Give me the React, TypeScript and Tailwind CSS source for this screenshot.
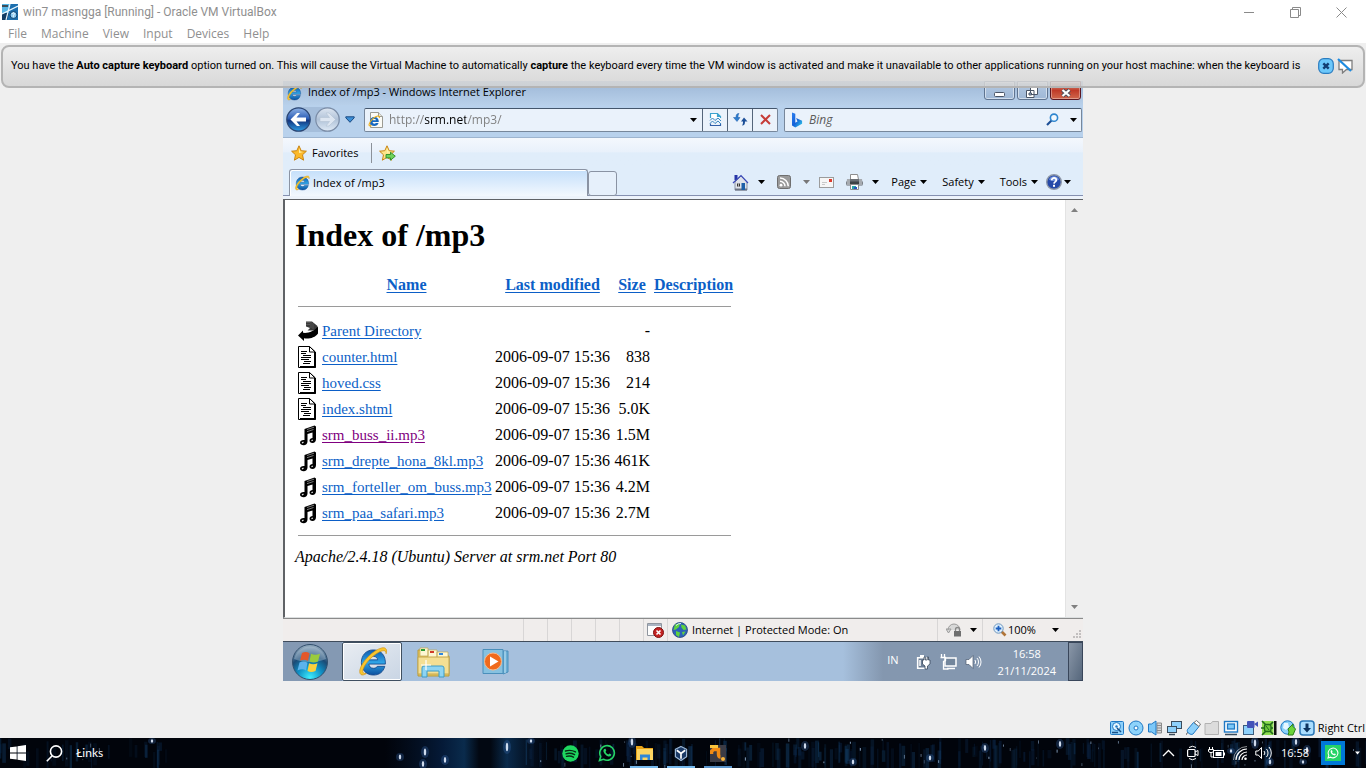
import React from "react";

type SvgProps = { className?: string };

const Caret = ({ className = "text-black" }: SvgProps) => (
  <svg width="7" height="4" viewBox="0 0 7 4" className={className} aria-hidden="true">
    <path d="M0 0h7L3.500 4z" fill="currentColor" />
  </svg>
);

const IeIcon = ({ size = 16 }: { size?: number }) => (
  <svg width={size} height={size} viewBox="0 0 32 32" aria-hidden="true">
    <defs>
      <linearGradient id="ieBlue" x1="0" y1="0" x2="0" y2="1">
        <stop offset="0" stopColor="#0f5cae" />
        <stop offset="0.5" stopColor="#2fa4e6" />
        <stop offset="1" stopColor="#0b4f9e" />
      </linearGradient>
    </defs>
    <path
      d="M17 4C9 4 4.500 10 4.500 17S9 30 17 30c6 0 10-3 11.700-9H21c-.8 1.400-2.200 2-4 2-2.800 0-4.500-1.600-4.700-4.300h17C29.800 10 25 4 17 4zm-4.500 10.300c.5-2.300 2-3.600 4.500-3.600s4 1.300 4.400 3.600z"
      fill="url(#ieBlue)"
      stroke="#0d4084"
      strokeWidth="0.800"
    />
    <path
      d="M30 8c1.600-4.200-.2-7-4.500-6C17 4 5 16 3 24.500c-1 5 2 7 6.500 4C6 28.500 5.200 26.500 6.500 23.500 9 16.500 18.500 7.500 25.500 5.200c3-.8 4.500-.2 4.500 2.800z"
      fill="#f9c62f"
      stroke="#d3930f"
      strokeWidth="0.700"
    />
  </svg>
);

const VmIcon = () => (
  <svg width="16" height="16" viewBox="0 0 16 16" aria-hidden="true">
    <rect width="16" height="16" fill="#1d6fae" />
    <path d="M0 0h8L4 16H0z" fill="#55b4e4" />
    <path d="M0 9h7l-2 7H0z" fill="#123c64" />
    <path d="M8 0L4 16M0 10l16-8" stroke="#e8f6ff" strokeWidth="1.200" />
    <path d="M0 1h6v2H0z" fill="#3c4c58" />
    <circle cx="11.500" cy="11" r="3.500" fill="#8cc9ef" stroke="#0f4370" />
    <path d="M10.500 10c0-2 3-1 1.500.6l-.7 1v1.200" stroke="#fff" fill="none" />
  </svg>
);

const HomeIcon = () => (
  <svg width="17" height="17" viewBox="0 0 17 17" aria-hidden="true">
    <path d="M2.500 1h3v5h-3z" fill="#2636a8" />
    <path d="M3 8v8h12V8L9 2z" fill="#dfe3ea" stroke="#8b93a5" />
    <path d="M1 9L9 1.500 16 9" fill="none" stroke="#3a49b8" strokeWidth="1.200" />
    <path d="M3 15.500h12" stroke="#6c7484" strokeWidth="2" />
    <rect x="9.500" y="9" width="3.500" height="7" fill="#1d5fa8" />
    <rect x="5" y="9.500" width="3" height="3" fill="#333" />
    <rect x="6.200" y="9.500" width=".6" height="3" fill="#fff" />
  </svg>
);

const RssIcon = () => (
  <svg width="14" height="14" viewBox="0 0 14 14" aria-hidden="true">
    <rect x=".5" y=".5" width="13" height="13" rx="2" fill="#9a9a9a" stroke="#6f6f6f" />
    <circle cx="4" cy="10.200" r="1.400" fill="#fff" />
    <path d="M3 6.300a5 5 0 0 1 5 5M3 3a8.300 8.300 0 0 1 8.300 8.300" fill="none" stroke="#fff" strokeWidth="1.500" />
  </svg>
);

const MailIcon = () => (
  <svg width="15" height="11" viewBox="0 0 15 11" aria-hidden="true">
    <rect x=".5" y=".5" width="14" height="10" fill="#f6f6f6" stroke="#9c9c9c" />
    <path d="M10 2h3v3h-3z" fill="#dd3b2d" />
    <path d="M3 5.500h5M3 7.500h3" stroke="#c8c8c8" />
  </svg>
);

const PrinterIcon = () => (
  <svg width="17" height="16" viewBox="0 0 17 16" aria-hidden="true">
    <path d="M4.500.5h7l1 5h-8z" fill="#fff" stroke="#8d8d8d" />
    <path d="M1 5h15l.5 6.500H.5z" fill="#6b6f74" />
    <path d="M.5 7.500h16v3H.5z" fill="#3e4144" />
    <path d="M1 5h3v6H1zM13 5h3v6h-3z" fill="#a7abb0" />
    <path d="M4.500 10.500h8v5h-8z" fill="#fff" stroke="#8d8d8d" />
    <path d="M6 12h4v3H6z" fill="#2aa8a8" />
    <path d="M8 13h3v2H8z" fill="#2b55c0" />
  </svg>
);

const HelpIcon = () => (
  <svg width="16" height="16" viewBox="0 0 16 16" aria-hidden="true">
    <circle cx="8" cy="8" r="7.300" fill="#2549a8" stroke="#8d97a8" strokeWidth="1.400" />
    <path d="M3 5.500a5.500 5.500 0 0 1 10 0c-3 2-7 2-10 0z" fill="#6e8fdc" />
    <path d="M5.700 6.300c0-3.200 4.800-3 4.600-.2C10.200 8 8.200 7.800 8 9.700" fill="none" stroke="#fff" strokeWidth="1.700" />
    <rect x="7" y="10.800" width="2" height="2" fill="#fff" />
  </svg>
);

const StarIcon = ({ add = false }: { add?: boolean }) => (
  <svg width="17" height="16" viewBox="0 0 17 16" aria-hidden="true">
    <path
      d="M8 .8l2.200 4.900 5.200.5-3.900 3.600 1.100 5.400L8 12.400l-4.600 2.800 1.100-5.400L.6 6.200l5.200-.5z"
      fill={add ? "#fbe48a" : "#fbb92a"}
      stroke="#c98412"
      strokeWidth="1"
    />
    <path d="M8 3l1.300 3.500 3 .4L8 8z" fill="#fff0a8" />
    {add && <path d="M7 9.500h4.500V7.200l4.800 4-4.800 4v-2.300H7z" fill="#6fd35b" stroke="#2c8a26" strokeWidth=".9" />}
  </svg>
);

const BackIcon = () => (
  <svg width="25" height="25" viewBox="0 0 25 25" aria-hidden="true">
    <defs>
      <linearGradient id="bk" x1="0" y1="0" x2="0" y2="1">
        <stop offset="0" stopColor="#8fb3e6" />
        <stop offset=".45" stopColor="#2f60b8" />
        <stop offset=".55" stopColor="#12367f" />
        <stop offset="1" stopColor="#2f9ee6" />
      </linearGradient>
    </defs>
    <circle cx="12.500" cy="12.500" r="11.700" fill="url(#bk)" stroke="#2b4674" strokeWidth="1.200" />
    <path d="M4.500 12.500L11 6h3l-3.500 4.500h9.500v4h-9.500L14 19h-3z" fill="#fff" />
  </svg>
);

const ForwardIcon = () => (
  <svg width="25" height="25" viewBox="0 0 25 25" aria-hidden="true">
    <defs>
      <linearGradient id="fw" x1="0" y1="0" x2="0" y2="1">
        <stop offset="0" stopColor="#dde6f1" />
        <stop offset=".5" stopColor="#b0c2d8" />
        <stop offset="1" stopColor="#dfeaf5" />
      </linearGradient>
    </defs>
    <circle cx="12.500" cy="12.500" r="11.700" fill="url(#fw)" stroke="#7a8ca6" strokeWidth="1.200" />
    <path d="M20.500 12.500L14 6h-3l3.500 4.500H5v4h9.500L11 19h3z" fill="#dde6f1" stroke="#b3c2d4" strokeWidth=".6" />
  </svg>
);

const PageIeIcon = () => (
  <svg width="16" height="16" viewBox="0 0 16 16" aria-hidden="true">
    <path d="M2.500.5h8l4 4v11h-12z" fill="#fbfbf6" stroke="#9b9b93" />
    <path d="M10.500.5v4h4" fill="#e3e3dc" stroke="#9b9b93" />
    <svg x="0" y="3" width="12" height="12" viewBox="0 0 32 32">
      <path d="M17 5C9.500 5 5 10.500 5 17s4.500 12 12 12c5.500 0 9.600-2.800 11.200-8H21c-.8 1.400-2.200 2-4 2-2.800 0-4.500-1.600-4.700-4.300h16.500C29.300 10.500 24.500 5 17 5zm-4.500 9.300c.5-2.300 2-3.600 4.500-3.600s4 1.300 4.400 3.600z" fill="#1668c0" />
      <path d="M30 8c1.200-3.400-.2-6-4.500-5.200C17 4.500 5 16 3 24.500c-1 4.800 2 6 6.500 3.300" fill="none" stroke="#f0b21e" strokeWidth="3" />
    </svg>
  </svg>
);

const CompatIcon = () => (
  <svg width="13" height="15" viewBox="0 0 13 15" aria-hidden="true">
    <path d="M1.500 6V1.500h7l3 3V6M8.500 1.500v3h3" fill="#fff" stroke="#3ba3cf" strokeWidth="1.200" />
    <path d="M1.500 11.500v2h10v-2" fill="none" stroke="#2f5fa8" strokeWidth="1.200" />
    <path d="M1 8.500L3.500 6 6 8.500 9 6l3 3M1 11.500L3.500 9 6 11.500 9 9l3 3" fill="none" stroke="#3a88c0" strokeWidth="1" />
  </svg>
);

const RefreshIcon = () => (
  <svg width="15" height="13" viewBox="0 0 15 13" aria-hidden="true">
    <path d="M6 .5C3.500.5 3 2 3 4.500H.5L4 8.500 7 4.500H5C5 3 5 2 6 .5z" fill="#2f7fd0" stroke="#1c5aa6" strokeWidth=".5" />
    <path d="M9 12.500c2.500 0 3-1.500 3-4h2.500L11 4.500 8 8.500h2c0 1.500 0 2.500-1 4z" fill="#1c4f98" />
  </svg>
);

const BingIcon = () => (
  <svg width="12" height="16" viewBox="0 0 12 16" aria-hidden="true">
    <defs>
      <linearGradient id="bing" x1="0" y1="0" x2="1" y2="1">
        <stop offset="0" stopColor="#2c7ff0" />
        <stop offset=".5" stopColor="#1460d8" />
        <stop offset="1" stopColor="#35d4e8" />
      </linearGradient>
    </defs>
    <path d="M1 .5l3.300 1.300v9l2.200-1.300-1.400-3.500 6 2.700v3L4.300 15.500 1 13.500z" fill="url(#bing)" />
  </svg>
);

const GlassIcon = () => (
  <svg width="13" height="13" viewBox="0 0 13 13" aria-hidden="true">
    <path d="M6 7L1 12" stroke="#1d4f96" strokeWidth="2.200" />
    <circle cx="8" cy="4.700" r="3.600" fill="#f2f8fd" stroke="#2f86cf" strokeWidth="1.600" />
  </svg>
);

const ParentDirIcon = () => (
  <svg width="20" height="22" viewBox="0 0 20 22" aria-hidden="true">
    <path d="M8 1.500h6l5.500 4.500-1 4.500H9.500L12 8l-4-1.500z" fill="#3a3a3a" />
    <path d="M9 2v4M11 2v4M13 2.500v6M15 3.500v6" stroke="#8a8a8a" strokeWidth=".7" strokeDasharray="1 1" />
    <path d="M0 15.500L5 10.500v2.300C11 13.300 15.500 11.500 20 6.500v7C17 18 11 19 6 18.300V21z" fill="#000" />
  </svg>
);

const TextFileIcon = () => (
  <svg width="20" height="22" viewBox="0 0 20 22" aria-hidden="true">
    <path d="M.5.500h11l6 5.500v15.500H.5z" fill="#fff" stroke="#000" />
    <path d="M17 6v15M2 21h15.500" stroke="#000" strokeWidth="2" />
    <path d="M11.500.5V6H17z" fill="#fff" stroke="#000" />
    <path d="M3 5.500h6M3 7.500h5M5 9.500h8M3 11.500h10M3 13.500h8M6 15.500h7M5 17.500h7" stroke="#000" />
  </svg>
);

const MusicIcon = () => (
  <svg width="20" height="22" viewBox="0 0 20 22" aria-hidden="true">
    <path d="M6.500 5L16.500 1.500l1.500 1V15c0 2.600-1.500 4-3.500 4s-3-1.200-3-2.500c0-1.600 1.500-2.500 3-2.500V8.500L9.500 10v7.500c0 2.400-1.700 3.700-3.800 3.700S2 20 2 18.700C2 16.700 4 15.700 6.500 16z" fill="#000" />
    <path d="M9 5.500l7-2.300M9 7.700l6.500-2.200" stroke="#9a9a9a" strokeWidth=".8" />
    <path d="M4 19l1.500-1M13.500 16.700l1.300-.8" stroke="#e8e8e8" strokeWidth="1.200" />
  </svg>
);

const files: { icon: "back" | "text" | "music"; name: string; date: string; size: string; visited?: boolean }[] = [
  { icon: "back", name: "Parent Directory", date: "", size: "-" },
  { icon: "text", name: "counter.html", date: "2006-09-07 15:36", size: "838" },
  { icon: "text", name: "hoved.css", date: "2006-09-07 15:36", size: "214" },
  { icon: "text", name: "index.shtml", date: "2006-09-07 15:36", size: "5.0K" },
  { icon: "music", name: "srm_buss_ii.mp3", date: "2006-09-07 15:36", size: "1.5M", visited: true },
  { icon: "music", name: "srm_drepte_hona_8kl.mp3", date: "2006-09-07 15:36", size: "461K" },
  { icon: "music", name: "srm_forteller_om_buss.mp3", date: "2006-09-07 15:36", size: "4.2M" },
  { icon: "music", name: "srm_paa_safari.mp3", date: "2006-09-07 15:36", size: "2.7M" },
];

function HostTitle() {
  return (
    <header className="bg-white font-['Open_Sans',sans-serif] text-[12px] text-[#8f8f8f]">
      <div className="flex h-6 items-center pr-[2px] pl-[2px]">
        <VmIcon />
        <h1 className="ml-[5px] flex-1 font-['Roboto',sans-serif] leading-4">win7 masngga [Running] - Oracle VM VirtualBox</h1>
        <button aria-label="Minimize" className="flex h-5 w-[46px] items-center justify-center">
          <svg width="11" height="11" viewBox="0 0 11 11"><path d="M0 5.500h10" stroke="#8a8a8a" /></svg>
        </button>
        <button aria-label="Restore" className="flex h-5 w-[46px] items-center justify-center">
          <svg width="11" height="11" viewBox="0 0 11 11" fill="none" stroke="#8a8a8a"><path d="M.5 2.500h8v8h-8zM2.500 2.500v-2h8v8h-2" /></svg>
        </button>
        <button aria-label="Close" className="flex h-5 w-[46px] items-center justify-center">
          <svg width="11" height="11" viewBox="0 0 11 11"><path d="M.5.500l10 10M10.500.5l-10 10" stroke="#8a8a8a" /></svg>
        </button>
      </div>
      <nav className="flex h-[19px] items-center gap-[14px] pl-2 leading-4">
        {["File", "Machine", "View", "Input", "Devices", "Help"].map((m) => (
          <button key={m}>{m}</button>
        ))}
      </nav>
    </header>
  );
}

function Banner() {
  return (
    <div className="relative z-10 mx-px mt-[2px] flex h-[43px] items-center rounded-[8px] border-2 border-[#b4b4b4] bg-linear-to-b from-[#eeeeee] to-[#d4d4d4]/85 pr-[9px] pb-[2px] pl-2 font-['Roboto',sans-serif] text-[11px] text-black">
      <p className="min-w-0 flex-1 leading-4 whitespace-nowrap">
        You have the <b>Auto capture keyboard</b> option turned on. This will cause the Virtual Machine to automatically{" "}
        <b>capture</b> the keyboard every time the VM window is activated and make it unavailable to other applications
        running on your host machine: when the keyboard is
      </p>
      <button aria-label="Close message" className="ml-[6px]">
        <svg width="16" height="16" viewBox="0 0 16 16">
          <rect x=".7" y=".7" width="14.600" height="14.600" rx="5" fill="#6cc8fb" stroke="#2a7cc0" strokeWidth="1.200" />
          <path d="M5.300 5.300l5.400 5.400M10.700 5.300l-5.400 5.400" stroke="#123f74" strokeWidth="2.400" />
        </svg>
      </button>
      <button aria-label="Do not show again" className="ml-[3px]">
        <svg width="17" height="16" viewBox="0 0 17 16">
          <path d="M2 2.500h13v9H9.500L5.500 15v-3.500H2z" fill="#fff" stroke="#7e7e7e" strokeWidth="1.300" />
          <path d="M1 1l13 12" stroke="#1e8be0" strokeWidth="2.200" />
        </svg>
      </button>
    </div>
  );
}

function IeChrome() {
  const cap = "flex h-[19px] w-[31px] items-center justify-center rounded-b-[3px] border border-[#5f7490] bg-linear-to-b from-[#b4c9e2] to-[#9fb8d6] shadow-[inset_0_0_0_1px_rgba(255,255,255,0.5)]";
  return (
    <div className="text-[11px] leading-4">
      <div className="flex h-6 items-center bg-linear-to-b from-[#9db7d6] to-[#b8d0ea] pr-[2px] pl-[3px]">
        <IeIcon size={16} />
        <h2 className="ml-[6px] flex-1 pb-[2px] text-black">Index of /mp3 - Windows Internet Explorer</h2>
        <div className="flex h-6 items-start gap-[2px]">
          <button aria-label="Minimize" className={cap}>
            <svg width="12" height="6" viewBox="0 0 12 6" className="mt-2"><rect x=".5" y=".5" width="10" height="4" rx="1" fill="#fff" stroke="#4a5566" /></svg>
          </button>
          <button aria-label="Restore" className={cap}>
            <svg width="13" height="12" viewBox="0 0 13 12" className="mt-1"><path d="M4.500.5h7v7h-7zM.5 3.500h7.500v7H.5z" fill="#fff" stroke="#4a5566" /><path d="M3 6h2.500v2H3z" fill="#9fb8d6" stroke="#4a5566" /></svg>
          </button>
          <button aria-label="Close" className="flex h-[19px] w-[31px] items-center justify-center rounded-b-[3px] border border-[#5c1620] bg-linear-to-b from-[#d29a92] via-[#c03a28] to-[#d0664c] shadow-[inset_0_0_0_1px_rgba(255,255,255,0.35)]">
            <svg width="12" height="10" viewBox="0 0 12 10" className="mt-1"><path d="M2.500 2l7 6M9.500 2l-7 6" stroke="#4b4f5c" strokeWidth="4" /><path d="M2.500 2l7 6M9.500 2l-7 6" stroke="#fff" strokeWidth="2.200" /></svg>
          </button>
        </div>
      </div>

      <div className="flex h-[33px] items-center border-b border-[#9db4cf] bg-[#b8d1ec] pr-px pb-[3px] pl-[3px]">
        <div className="flex items-center rounded-full bg-[#a5bedb]">
          <button aria-label="Back"><BackIcon /></button>
          <button aria-label="Forward" className="ml-1"><ForwardIcon /></button>
        </div>
        <button aria-label="Recent pages" className="ml-1 flex h-6 w-3 items-center justify-center">
          <svg width="10" height="7" viewBox="0 0 10 7"><path d="M.8.8h8.400v1L5 6.300.8 1.800z" fill="#3c8fd6" stroke="#1b4a82" /></svg>
        </button>
        <div className="ml-2 flex h-6 min-w-0 flex-1 items-stretch rounded-[2px] border border-[#77879b] border-t-[#44566c] bg-[#eaf2fb]">
          <label className="flex min-w-0 flex-1 items-center pl-[3px]">
            <PageIeIcon />
            <input
              aria-label="Address"
              defaultValue="http://srm.net/mp3/"
              className="ml-[5px] min-w-0 flex-1 bg-[linear-gradient(90deg,#7d7d7d_35px,#000000_35px,#000000_77px,#7d7d7d_77px)] bg-clip-text text-[12px] leading-4 text-transparent outline-none"
            />
          </label>
          <button aria-label="Show addresses" className="flex w-[18px] items-center justify-center"><Caret /></button>
          <button aria-label="Compatibility view" className="flex w-[25px] items-center justify-center border-l border-[#54657a]"><CompatIcon /></button>
          <button aria-label="Refresh" className="flex w-[25px] items-center justify-center border-l border-[#54657a]"><RefreshIcon /></button>
          <button aria-label="Stop" className="flex w-[25px] items-center justify-center border-l border-[#54657a]">
            <svg width="11" height="11" viewBox="0 0 11 11"><path d="M1 1l9 9M10 1l-9 9" stroke="#c63c38" strokeWidth="2" /></svg>
          </button>
        </div>
        <div className="ml-[6px] flex h-6 w-[298px] items-center rounded-[2px] border border-[#77879b] border-t-[#44566c] bg-[#eaf2fb] pl-[6px]">
          <BingIcon />
          <input aria-label="Search" placeholder="Bing" className="ml-[6px] min-w-0 flex-1 text-[12px] leading-4 italic outline-none placeholder:text-[#5c5c5c]" />
          <button aria-label="Search"><GlassIcon /></button>
          <button aria-label="Search options" className="ml-[6px] flex w-4 items-center justify-center"><Caret /></button>
        </div>
      </div>

      <div className="flex h-[30px] items-center bg-linear-to-b from-[#f4f8fd] from-0% via-[#e9f1fb] via-45% to-[#e0edfa] to-50% pl-2">
        <button className="flex items-center gap-1 text-black"><StarIcon /><span>Favorites</span></button>
        <span className="ml-3 h-5 w-px bg-[#8b9199]" />
        <button aria-label="Add to favorites bar" className="ml-[7px]"><StarIcon add /></button>
      </div>

      <div className="flex h-7 items-end bg-[#e0edfa] shadow-[inset_0_-1px_0_#8590b0]">
        <button className="ml-[6px] flex h-[27px] w-[299px] items-center gap-[3px] rounded-t-[3px] border border-b-0 border-[#8a93a3] bg-linear-to-b from-[#c4dffa] to-[#f3f8fe] pl-1 text-black shadow-[inset_1px_1px_0_#ffffff]">
          <IeIcon size={16} />
          <span>Index of /mp3</span>
        </button>
        <button aria-label="New tab" className="h-[25px] w-[29px] rounded-[3px] border border-[#8a93a3] bg-[#e6f0fb]" />
        <div className="flex h-7 flex-1 items-center justify-end pr-3 text-black">
          <button aria-label="Home"><HomeIcon /></button>
          <button aria-label="Home options" className="ml-[9px] py-2"><Caret /></button>
          <button aria-label="Feeds" className="ml-3"><RssIcon /></button>
          <button aria-label="Feed options" className="ml-3 py-2"><Caret className="text-[#777777]" /></button>
          <button aria-label="Read mail" className="ml-[9px]"><MailIcon /></button>
          <button aria-label="Print" className="ml-3"><PrinterIcon /></button>
          <button aria-label="Print options" className="ml-[9px] py-2"><Caret /></button>
          <button className="ml-3 flex items-center gap-1">Page<Caret /></button>
          <button className="ml-[15px] flex items-center gap-1">Safety<Caret /></button>
          <button className="ml-[15px] flex items-center gap-1">Tools<Caret /></button>
          <button aria-label="Help" className="ml-2 flex items-center gap-[2px]"><HelpIcon /><Caret /></button>
        </div>
      </div>
      <div className="h-[3px] bg-[#edf3fb]" />
    </div>
  );
}

function DirectoryPage() {
  const link = "text-[#0c5fc7] underline underline-offset-2";
  return (
    <div className="flex h-[419px] border-t border-b border-l-2 border-[#5f6266] border-b-[#dcdfe0] bg-white">
      <main className="flex-1 pt-[17px] pl-[10px] font-['Liberation_Serif',serif] text-[16px] leading-5 text-black">
        <h1 className="text-[32px] leading-9 font-bold">Index of /mp3</h1>
        <table className="mt-[22px] ml-[3px] w-[433px] table-fixed border-collapse">
          <colgroup>
            <col className="w-6" />
            <col className="w-[173px]" />
            <col className="w-[119px]" />
            <col className="w-10" />
            <col className="w-[77px]" />
          </colgroup>
          <thead>
            <tr className="h-5">
              <th className="p-0" aria-label="Type" />
              <th className="p-0 pr-1"><a href="#name" className={link}>Name</a></th>
              <th className="p-0 pr-1"><a href="#modified" className={link}>Last modified</a></th>
              <th className="p-0 pr-1"><a href="#size" className={link}>Size</a></th>
              <th className="p-0"><a href="#description" className={link}>Description</a></th>
            </tr>
          </thead>
          <tbody>
            <tr><td colSpan={5} className="h-[23px] p-0"><hr className="border-[#9a9a9a]" /></td></tr>
            {files.map((f) => (
              <tr key={f.name} className="h-[26px]">
                <td className="p-0">
                  {f.icon === "back" ? <ParentDirIcon /> : f.icon === "text" ? <TextFileIcon /> : <MusicIcon />}
                </td>
                <td className="p-0 text-[15px] whitespace-nowrap">
                  <a href={"#" + f.name} className={f.visited ? "text-[#800080] underline underline-offset-2" : link}>{f.name}</a>
                </td>
                <td className="p-0 pr-1 text-right whitespace-nowrap">{f.date}</td>
                <td className="p-0 pr-1 text-right">{f.size}</td>
                <td className="p-0" />
              </tr>
            ))}
            <tr><td colSpan={5} className="h-[19px] p-0"><hr className="border-[#9a9a9a]" /></td></tr>
          </tbody>
        </table>
        <address className="mt-[2px] italic">Apache/2.4.18 (Ubuntu) Server at srm.net Port 80</address>
      </main>
      <div className="flex w-[18px] flex-col items-center justify-between border-l border-[#e3e3e3] bg-[#efefef] py-2 pr-px" aria-hidden="true">
        <svg width="7" height="4" viewBox="0 0 7 4"><path d="M0 4h7L3.500 0z" fill="#808080" /></svg>
        <svg width="7" height="4" viewBox="0 0 7 4"><path d="M0 0h7L3.500 4z" fill="#808080" /></svg>
      </div>
    </div>
  );
}

function IeStatus() {
  return (
    <div className="flex h-6 items-stretch border-t border-b border-t-[#8b8b8b] border-b-[#3f4c5c] bg-[#f0edec] text-[11px] leading-4 text-black">
      <div className="flex flex-1 items-stretch justify-end">
        {[0, 1, 2, 3, 4].map((i) => (
          <span key={i} className="w-6 border-l border-[#d8d6d6]" />
        ))}
        <span className="flex w-6 items-center justify-center border-l border-[#d8d6d6]">
          <svg width="17" height="16" viewBox="0 0 17 16" aria-hidden="true">
            <path d="M.5 1.500h14v12H.5z" fill="#fdfdfd" stroke="#8f959e" />
            <path d="M1 2h13v2H1z" fill="#aab4c2" />
            <circle cx="11.500" cy="10.500" r="5" fill="#c32222" stroke="#7e0f0f" />
            <path d="M9.500 8.500l4 4M13.500 8.500l-4 4" stroke="#fff" strokeWidth="1.600" />
          </svg>
        </span>
      </div>
      <div className="flex w-[270px] items-center gap-1 border-l border-[#d8d6d6] pl-1">
        <svg width="16" height="16" viewBox="0 0 16 16" aria-hidden="true">
          <circle cx="8" cy="8" r="7.500" fill="#2d62b8" stroke="#27467f" strokeWidth=".8" />
          <path d="M3 2.500l5-1.500-1 4-3 2.500-2.500.5zM9 2.500l4 1 1.500 4-3 .5-2-2.500zM4 9l4 1.500L7 15l-3-2zM10 10l3.500-.5-2.500 4z" fill="#5fd23e" />
          <path d="M4 3.500a6 6 0 0 1 5-2" stroke="#d5ecff" fill="none" />
        </svg>
        <span>Internet | Protected Mode: On</span>
      </div>
      <button aria-label="Privacy" className="flex w-[45px] items-center gap-2 border-l border-[#d8d6d6] pl-2">
        <svg width="16" height="14" viewBox="0 0 16 14" aria-hidden="true">
          <path d="M2 7a6 6 0 1 1 12 0M0 6h5L2.500 10z" fill="#d8d8d8" stroke="#9c9c9c" />
          <path d="M9.500 8V6.500a2 2 0 0 1 4 0V8" fill="none" stroke="#888" strokeWidth="1.300" />
          <rect x="8" y="8" width="7" height="5.500" fill="#6f6f6f" />
        </svg>
        <Caret />
      </button>
      <button className="flex w-[101px] items-center border-l border-[#d8d6d6] pl-[10px]">
        <svg width="14" height="14" viewBox="0 0 14 14" aria-hidden="true">
          <path d="M8.500 8.500l4 4" stroke="#b07438" strokeWidth="2.600" />
          <circle cx="5.500" cy="5.500" r="4.700" fill="#dff0fd" stroke="#6d95bd" />
          <path d="M5.500 2.700v5.600M2.700 5.500h5.600" stroke="#1c5fc0" strokeWidth="1.800" />
        </svg>
        <span className="ml-px">100%</span>
        <span className="ml-4"><Caret /></span>
        <svg className="mt-2 mr-px ml-auto" width="9" height="9" viewBox="0 0 9 9" aria-hidden="true">
          <path d="M6 0h2v2H6zM3 3h2v2H3zM6 3h2v2H6zM0 6h2v2H0zM3 6h2v2H3zM6 6h2v2H6z" fill="#c2bfbf" />
        </svg>
      </button>
    </div>
  );
}

function GuestTaskbar() {
  return (
    <div className="flex h-[39px] items-stretch bg-linear-to-r from-[#a6c0dd] from-70% to-[#8497af] to-75% text-white">
      <button aria-label="Start" className="flex w-[59px] items-center bg-[#8499b3] pl-[8px]">
        <svg width="38" height="38" viewBox="0 0 38 38" aria-hidden="true">
          <defs>
            <radialGradient id="orb" cx=".5" cy=".95" r=".9">
              <stop offset="0" stopColor="#3ff0ff" />
              <stop offset=".4" stopColor="#0f8fc4" />
              <stop offset=".7" stopColor="#1b4a75" />
              <stop offset="1" stopColor="#8aa3b8" />
            </radialGradient>
          </defs>
          <circle cx="19" cy="19" r="17.500" fill="url(#orb)" stroke="#33506e" />
          <path d="M3 16A16.500 16.500 0 0 1 35 16C26 20 12 20 3 16z" fill="#cfdde8" opacity=".35" />
          <path d="M11 10c3-1.600 5-1.200 7.500.2L17 18c-2.500-1.500-5-1.600-8-.3z" fill="#e4572a" />
          <path d="M20 10.800c3 1.400 5.500 1.400 9 0L27 18.500c-3 1.300-5.500 1.300-8.500 0z" fill="#9acb3c" />
          <path d="M8.500 19.500c3-1.300 5.500-1.200 8 .3L15 27.500c-2.500-1.600-5-1.500-8.500 0z" fill="#5cb3ec" />
          <path d="M18 20.300c3 1.400 5.500 1.300 8.500 0l-2 7.700c-3 1.300-5.500 1.300-8 0z" fill="#fbd03c" />
        </svg>
      </button>
      <button aria-label="Internet Explorer" className="flex w-[60px] items-center justify-center rounded-[2px] border border-[#3f4f60] bg-linear-to-br from-[#e9edf2] to-[#c9d5e4] shadow-[inset_0_0_0_1px_#ffffff]">
        <IeIcon size={31} />
      </button>
      <button aria-label="Windows Explorer" className="flex w-[64px] items-center justify-center">
        <svg width="34" height="32" viewBox="0 0 34 32" aria-hidden="true">
          <path d="M1 4h9l2 3h5l2 3h13v20H1z" fill="#e8c860" stroke="#b79a3a" />
          <path d="M3 2h8v8H3zM11 4h9v8h-9zM20 6h11v8H20z" fill="#fdf6d2" stroke="#c0a652" strokeWidth=".7" />
          <path d="M4 3h4v2H4z" fill="#2a9c34" /><path d="M13 5h4v2h-4z" fill="#d13a2a" /><path d="M22 7h4v2h-4z" fill="#2c86e0" />
          <path d="M1 11h31v17H1z" fill="#f5df93" stroke="#c4a74e" />
          <path d="M5 31V22q0-2 2-2h18q2 0 2 2v9h-5v-6H10v6z" fill="#8ed4f2" stroke="#3c9cc8" />
          <path d="M9 14v10M4 19h10" stroke="#fff" strokeWidth="1.200" />
        </svg>
      </button>
      <button aria-label="Windows Media Player" className="flex w-[60px] items-center justify-center">
        <svg width="30" height="28" viewBox="0 0 30 28" aria-hidden="true">
          <path d="M22 3h5v21l-5 2z" fill="#6dafd6" stroke="#4a8fbb" />
          <path d="M2 1.500h20v24H2z" fill="#86c1e0" stroke="#4a8fbb" />
          <path d="M24 3v22" stroke="#c4e6f5" />
          <circle cx="12" cy="13.500" r="8.500" fill="#f06a1c" stroke="#f9b98a" />
          <path d="M9 8.500v10l8.500-5z" fill="#fff" />
        </svg>
      </button>
      <div className="flex flex-1 items-center justify-end text-[11px] leading-4">
        <span className="pb-1">IN</span>
        <div className="ml-[17px] flex items-center gap-2">
          <svg width="16" height="16" viewBox="0 0 16 16" aria-hidden="true">
            <path d="M1.700 3.700h8.600v10.600H1.700z" fill="#6b7d94" stroke="#fff" strokeWidth="1.600" />
            <path d="M4 1h4v3H4z" fill="#fff" />
            <path d="M4 6v6" stroke="#fff" strokeWidth="1.500" />
            <path d="M8 3v3H6.500v4L9 12v3h2.500v-3l2.500-2V6h-1.500V3h-1.300v3H9.300V3z" fill="#fff" stroke="#39485a" strokeWidth=".8" />
          </svg>
          <svg width="17" height="16" viewBox="0 0 17 16" aria-hidden="true">
            <path d="M5 4h11v8H5z" fill="#73869c" stroke="#fff" strokeWidth="1.500" />
            <path d="M7 14.500h8" stroke="#fff" strokeWidth="1.500" />
            <path d="M1.500 0v4M4.500 0v4M.5 3.500h5v3l-2 1V15h5" fill="none" stroke="#fff" strokeWidth="1.300" />
          </svg>
          <svg width="17" height="16" viewBox="0 0 17 16" aria-hidden="true">
            <path d="M1 5.500h3L8 1.500v13L4 10.500H1z" fill="#fff" stroke="#4a5a6e" strokeWidth=".7" />
            <path d="M10 6a3.500 3.500 0 0 1 0 4M12 4a6 6 0 0 1 0 8M14 2.500a8.500 8.500 0 0 1 0 11" fill="none" stroke="#fff" />
          </svg>
        </div>
        <div className="mr-3 ml-4 text-center leading-[17px]">
          <div>16:58</div>
          <div>21/11/2024</div>
        </div>
        <button aria-label="Show desktop" className="h-full w-[15px] border border-[#39465a] bg-linear-to-br from-[#8a97a8] to-[#56677c]" />
      </div>
    </div>
  );
}

const box = "#1f78c4";
const statusIcons: { name: string; art: React.ReactNode }[] = [
  { name: "Hard disks", art: <><rect x="1.500" y="1.500" width="13" height="13" rx="1" fill="#8dd0fa" stroke={box} /><circle cx="7.500" cy="6.500" r="4" fill="#e8f7ff" stroke={box} /><circle cx="7.500" cy="6.500" r="1.200" fill={box} /><path d="M8 8l4 4M3 12.500h6" stroke="#194f86" strokeWidth="1.500" /></> },
  { name: "Optical drives", art: <><circle cx="8" cy="8" r="7" fill="#8dd3fb" stroke={box} /><circle cx="8" cy="8" r="2" fill="#fff" stroke={box} /></> },
  { name: "Audio", art: <><path d="M10 3h4.500v10H10zM10 5.500h4.500M10 8h4.500M10 10.500h4.500" fill="#d8d8d8" stroke="#8b8b8b" /><path d="M1.500 4h3L9 1v14l-4.500-3h-3z" fill="#7cc8f8" stroke={box} /></> },
  { name: "Network", art: <><rect x="5.500" y="1.500" width="10" height="7" fill="#8dd0fa" stroke="#3a4c5c" /><rect x="1.500" y="6.500" width="9" height="6" fill="#8dd0fa" stroke="#3a4c5c" /><path d="M3 14.500h6" stroke="#3a4c5c" strokeWidth="1.500" /></> },
  { name: "USB devices", art: <><path d="M1 14.500c2-1 1-3 3-3.500" stroke="#444" fill="none" /><path d="M2.500 9.500l6-7 5.500 4-6 7.500c-2 1.500-7-1.500-5.500-4.500z" fill="#8dd0fa" stroke={box} /><path d="M9 2.500L11.500.5l4 3.500L14 6.500z" fill="#fff" stroke="#777" /></> },
  { name: "Shared folders", art: <path d="M1 3.500h6l1.500-2h6v13H1z" fill="#dcdcdc" stroke="#b2b2b2" /> },
  { name: "Display", art: <><rect x="1.500" y="1.500" width="13" height="10.500" fill="#fff" stroke={box} strokeWidth="1.400" /><rect x="4.500" y="4" width="7" height="5" fill="#7cc8f8" stroke={box} strokeWidth="1.300" /><path d="M2 14.500h12" stroke="#3a4c5c" strokeWidth="1.500" /></> },
  { name: "Recording", art: <><rect x="1.500" y="5.500" width="10" height="9" fill="#8dd0fa" stroke="#3a5c7c" /><rect x="5" y="1" width="7.500" height="7" rx="1" fill="#4353b8" /><path d="M12 4l4-2.500V7z" fill="#4353b8" /></> },
  { name: "Processor", art: <><path d="M1 1h11.500v14H1z" fill="#8ddc50" /><path d="M1 1l4 4M12 2L9 5M1 15l4-4M12 14l-3-3M0 8h4M9 8h3" stroke="#1f6a1a" strokeWidth="1.600" fill="none" /><rect x="3.500" y="4.500" width="6.500" height="7" rx="2" fill="#6fc93a" stroke="#1f6a1a" strokeWidth="1.300" /><path d="M5 6l3 4" stroke="#1f6a1a" /><rect x="13" y="1" width="2.500" height="14" fill="#111" /></> },
  { name: "Mouse integration", art: <><circle cx="7.500" cy="7.500" r="6.700" fill="#8ad0f8" stroke={box} /><path d="M4 3l4 0 1 4-3 3-3-2z" fill="#e8f7ff" /><path d="M8 9l5-5v2.500l2.500 2.500L13 15H8l1-3z" fill="#6bd43a" stroke="#2d7d1b" /></> },
  { name: "Host key", art: <><rect x="1" y="1" width="14" height="14" rx="3" fill="#a9ddff" stroke="#2b78b8" strokeWidth="1.500" /><path d="M6.500 3.500h3V8H12l-4 4.500L4 8h2.500z" fill="#0e3560" /></> },
];

function VmStatus() {
  return (
    <div className="flex h-[19px] items-center justify-end pr-px pb-px">
      <div className="flex gap-[3px]">
        {statusIcons.map((i) => (
          <button key={i.name} aria-label={i.name} title={i.name}>
            <svg width="16" height="16" viewBox="0 0 16 16">{i.art}</svg>
          </button>
        ))}
      </div>
      <span className="ml-[3px] font-['Open_Sans',sans-serif] text-[11px] leading-4 text-black">Right Ctrl</span>
    </div>
  );
}

function Streaks() {
  const items: React.ReactNode[] = [];
  let s = 11;
  const rnd = () => (s = (s * 16807) % 2147483647) / 2147483647;
  for (let i = 0; i < 240; i++) {
    const x = i < 30 ? rnd() * 165 : 500 + rnd() * 866;
    items.push(<rect key={i} x={x} y={rnd() * 14} width={1 + rnd() * 3} height={8 + rnd() * 22} fill={rnd() > 0.3 ? "#0b2444" : "#14406a"} opacity={0.15 + rnd() * 0.4} />);
  }
  for (let i = 0; i < 46; i++) {
    const x = i < 4 ? rnd() * 110 : 540 + rnd() * 826;
    items.push(<rect key={"d" + i} x={x} y={rnd() * 28} width="1" height={1 + rnd() * 3} fill="#a9c8ea" opacity={0.3 + rnd() * 0.5} />);
  }
  const spots = [[152, 3, 3], [400, 19, 4], [425, 14, 6], [423, 26, 5], [445, 22, 5], [507, 9, 7], [531, 3, 3], [632, 4, 6], [805, 8, 5], [853, 24, 4], [930, 20, 4], [985, 10, 5], [1060, 6, 5], [1255, 5, 6], [1231, 13, 3], [1270, 24, 4], [1296, 4, 5], [1307, 12, 5], [1303, 24, 3]];
  return (
    <svg className="absolute inset-0 h-full w-full" viewBox="0 0 1366 30" preserveAspectRatio="none" aria-hidden="true">
      <defs>
        <linearGradient id="glow" x1="0" y1="0" x2="1" y2="0">
          <stop offset="0" stopColor="#04142c" stopOpacity="0" />
          <stop offset=".35" stopColor="#051a38" />
          <stop offset=".48" stopColor="#0a2b4c" />
          <stop offset=".57" stopColor="#020812" />
          <stop offset=".64" stopColor="#020812" />
          <stop offset=".74" stopColor="#0a2b4c" />
          <stop offset="1" stopColor="#04142c" stopOpacity="0" />
        </linearGradient>
      </defs>
      <rect x="385" width="165" height="30" fill="url(#glow)" />
      {items}
      {spots.map(([x, y, h]) => (
        <g key={x + "-" + y}>
          <ellipse cx={x} cy={y} rx="4" ry={h} fill="#3c6cb4" opacity=".3" />
          <ellipse cx={x} cy={y} rx="1.200" ry={h * 0.6} fill="#e3eeff" opacity=".9" />
        </g>
      ))}
    </svg>
  );
}

const WhatsApp = ({ color }: { color: string }) => (
  <svg width="18" height="18" viewBox="0 0 18 18" fill="none" aria-hidden="true">
    <path d="M1.500 16.500l1.200-4A7.300 7.300 0 1 1 5.500 15.300z" stroke={color} strokeWidth="1.600" />
    <path d="M6.200 5l1.300-.2.800 2-.8 1c.6 1.300 1.600 2.200 2.900 2.800l1-1 1.900 1c-.2 1.700-1.500 2.300-3 1.800C8 11.700 6.200 10 5.500 7.800 5.200 6.500 5.500 5.600 6.200 5z" fill={color} />
  </svg>
);

function HostTaskbar() {
  const app = "flex h-[30px] w-7 items-center justify-center";
  return (
    <footer className="relative h-[30px] bg-[#01040b] text-white">
      <Streaks />
      <div className="relative flex h-[30px] items-center">
        <div className="flex w-2/5 items-center pl-[10px]">
          <button aria-label="Start">
            <svg width="16" height="16" viewBox="0 0 16 16"><path d="M0 2.300l6.700-.9v6.200H0zM7.500 1.200L16 0v7.600H7.500zM0 8.400h6.700v6.200L0 13.700zM7.500 8.400H16V16l-8.500-1.200z" fill="#fff" /></svg>
          </button>
          <button aria-label="Search" className="ml-5">
            <svg width="17" height="17" viewBox="0 0 17 17" fill="none" stroke="#fff" strokeWidth="1.600"><circle cx="10" cy="6.500" r="5.600" /><path d="M6.200 10.800L.8 16.300" /></svg>
          </button>
          <button className="ml-[13px] font-['Lato',sans-serif] text-[12px] leading-4">Łinks</button>
        </div>
        <div className="flex gap-[9px] pl-[10px]">
          <button aria-label="Spotify" className={app}>
            <svg width="17" height="17" viewBox="0 0 17 17"><circle cx="8.500" cy="8.500" r="8.200" fill="#1ed760" /><path d="M3.500 6c3.300-1 7-.7 10 .9M4 8.800c2.800-.8 6-.5 8.600.9M4.500 11.400c2.300-.6 4.900-.4 7 .8" stroke="#062c14" strokeWidth="1.400" fill="none" strokeLinecap="round" /></svg>
          </button>
          <button aria-label="WhatsApp" className={app}><WhatsApp color="#25d366" /></button>
          <button aria-label="File Explorer" className={app + " shadow-[inset_0_-2px_0_#76b9ed]"}>
            <svg width="17" height="15" viewBox="0 0 17 15"><path d="M0 0h6l2 2h9v12H0z" fill="#e8a317" /><path d="M1 3h16v11H1z" fill="#fcd462" /><path d="M4 14V8.500h10V14h-2.500v-2.500h-5V14z" fill="#2f86d8" /></svg>
          </button>
          <button aria-label="VirtualBox" className={app + " shadow-[inset_0_-2px_0_#76b9ed]"}>
            <svg width="14" height="17" viewBox="0 0 15 17"><path d="M7.500 1l6 3v8l-6 4-6-4V4z" fill="#1b3a66" stroke="#9db9d9" strokeWidth="1.300" /><path d="M3 5l4.500 3.500L12 5M7.500 8.500V14" stroke="#fff" strokeWidth="1.800" fill="none" /></svg>
          </button>
          <button aria-label="Running machine" className={app + " shadow-[inset_0_-2px_0_#5b95cb]"}>
            <svg width="16" height="17" viewBox="0 0 16 17"><rect width="16" height="17" fill="#3b3b45" /><path d="M1.500 9V6.500l2-2h5V9q0 3 2 3" fill="none" stroke="#f08a14" strokeWidth="3.500" /><path d="M0 1.500h8" stroke="#f8c43c" strokeWidth="3" /><circle cx="13" cy="14" r="2" fill="#f8b43c" /></svg>
          </button>
        </div>
        <div className="flex flex-1 items-center justify-end">
          <button aria-label="Show hidden icons"><svg width="13" height="8" viewBox="0 0 13 8"><path d="M1 7l5.500-5.500L12 7" fill="none" stroke="#fff" strokeWidth="1.300" /></svg></button>
          <svg className="ml-3" width="12" height="16" viewBox="0 0 12 16" fill="none" stroke="#fff" aria-hidden="true"><rect x=".6" y="4.500" width="7.500" height="7" rx="1" strokeWidth="1.200" /><path d="M8 7l3-1.500v5L8 9M2 2.500a6 6 0 0 1 7 0M2 13.500a6 6 0 0 0 7 0" /></svg>
          <svg className="ml-[9px]" width="17" height="14" viewBox="0 0 17 14" fill="none" stroke="#fff" aria-hidden="true"><rect x="5.500" y="4.500" width="10" height="7" /><rect x="8" y="6.500" width="5" height="3" fill="#fff" /><path d="M16.500 6.500v3M1.500 1v3M4.500 1v3M.5 3.500h5v2l-1.500 1H2L.5 5.500zM3 6.500V11h2.500" /></svg>
          <svg className="ml-2" width="15" height="15" viewBox="0 0 15 15" fill="none" stroke="#fff" aria-hidden="true"><path d="M9 14a5 5 0 0 1 5-5M6 14a8 8 0 0 1 8-8M3 14A11 11 0 0 1 14 3" strokeWidth="1.200" /><circle cx="12.500" cy="12.800" r="1.300" fill="#fff" stroke="none" /><path d="M.5 14A13.500 13.500 0 0 1 14 .5" opacity=".55" /></svg>
          <svg className="ml-[7px]" width="18" height="14" viewBox="0 0 18 14" fill="none" stroke="#fff" aria-hidden="true"><path d="M.8 5h2.500L6.500 1.500v11L3.300 9H.8z" /><path d="M9 5a3 3 0 0 1 0 4M11.500 3a6 6 0 0 1 0 8M14 1a9 9 0 0 1 0 12" /></svg>
          <span className="ml-2 font-['Open_Sans',sans-serif] text-[11px] leading-4">16:58</span>
          <button aria-label="WhatsApp notification" className="ml-3 flex h-6 w-6 items-center justify-center bg-[#0078d7]">
            <span className="flex h-4 w-4 items-center justify-center bg-[#25d366] p-[2px]"><WhatsApp color="#ffffff" /></span>
          </button>
          <span className="mr-[6px] ml-[10px]"><Caret className="w-[5px] text-white" /></span>
        </div>
      </div>
    </footer>
  );
}

export default function App() {
  return (
    <div className="flex min-h-screen flex-col overflow-x-hidden bg-[#efefef]">
      <HostTitle />
      <Banner />
      <section className="mx-auto -mt-[7px] w-[800px] bg-[#b8d1ec] font-['Open_Sans',sans-serif]">
        <IeChrome />
        <DirectoryPage />
        <IeStatus />
        <GuestTaskbar />
      </section>
      <div className="flex-1" />
      <VmStatus />
      <HostTaskbar />
    </div>
  );
}
